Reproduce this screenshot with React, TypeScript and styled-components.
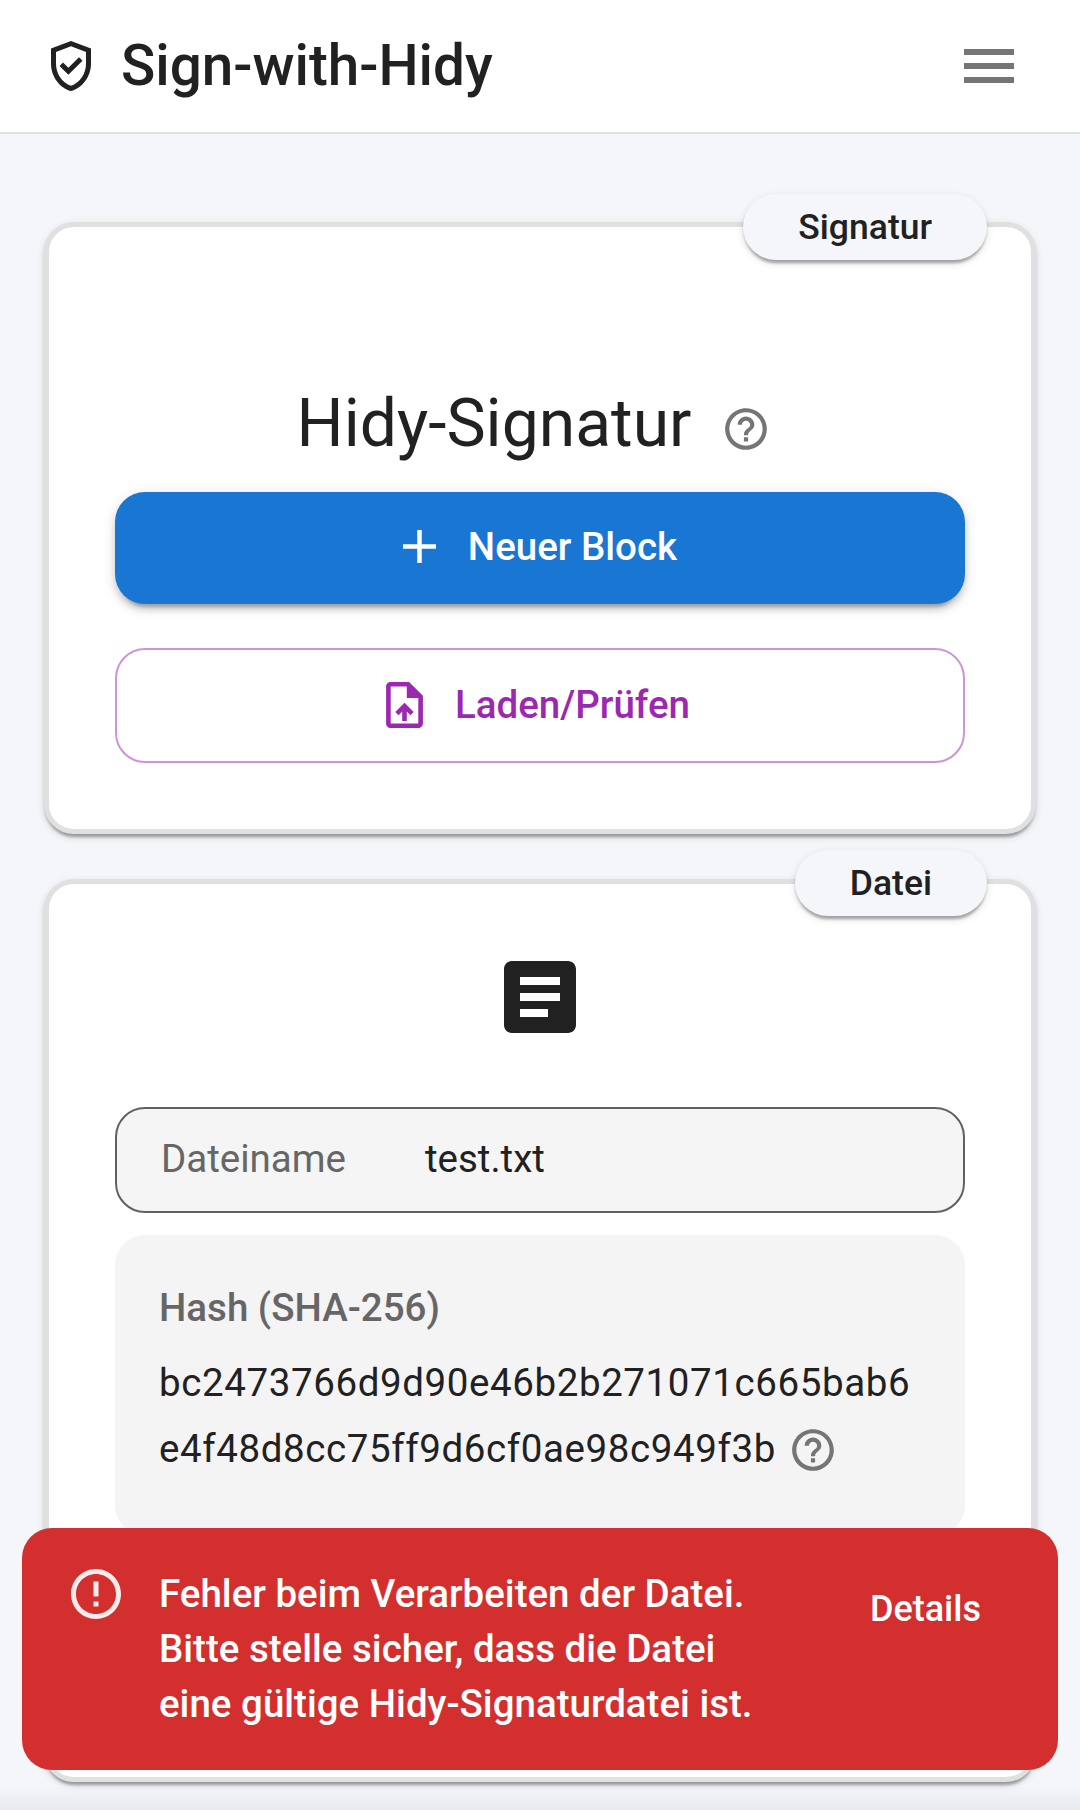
import React from 'react';
import styled, { createGlobalStyle } from 'styled-components';

const elevation1 = '0 6px 3px -3px rgba(0,0,0,.2), 0 3px 3px 0 rgba(0,0,0,.14), 0 3px 9px 0 rgba(0,0,0,.12)';
const elevation2 = '0 9px 3px -6px rgba(0,0,0,.2), 0 6px 6px 0 rgba(0,0,0,.14), 0 3px 15px 0 rgba(0,0,0,.12)';

const GlobalStyle = createGlobalStyle`
  html, body {
    margin: 0;
    padding: 0;
    background: #f5f6fa;
    font-family: Roboto, "Noto Sans", sans-serif;
    color: #212121;
  }
  * { box-sizing: border-box; }
`;

const Page = styled.div`
  position: relative;
  width: 1080px;
  height: 1810px;
  overflow: hidden;
  background: #f5f6fa;
`;

const Header = styled.header`
  display: flex;
  align-items: center;
  justify-content: space-between;
  height: 134px;
  padding: 0 66px 0 41px;
  background: #fff;
  border-bottom: 2px solid #e0e0e0;
`;

const Brand = styled.div`
  display: flex;
  align-items: center;
  gap: 20px;
`;

const BrandTitle = styled.h1`
  margin: 0;
  font-size: 56.6px;
  font-weight: 500;
  line-height: 64px;
`;

const Main = styled.main`
  display: flex;
  flex-direction: column;
  gap: 45px;
  padding: 88px 44px 0;
`;

const Card = styled.section`
  position: relative;
  display: flex;
  flex-direction: column;
  align-items: stretch;
  padding: 0 66px;
  background: #fff;
  border-radius: 30px;
  border: 5px solid #e0e0e0;
  box-shadow: ${elevation1};
`;

const TabLabel = styled.div<{ $raised?: boolean }>`
  position: absolute;
  top: ${p => (p.$raised ? '-34px' : '-33px')};
  right: 44px;
  display: flex;
  align-items: center;
  height: 66px;
  padding: 0 55px;
  border-radius: 33px;
  background: #f5f6fa;
  font-size: 35.5px;
  font-weight: 500;
  box-shadow: ${elevation1};
`;

const CardHeading = styled.div`
  display: flex;
  align-items: center;
  justify-content: center;
  gap: 30px;
  margin-top: 157px;
  height: 80px;
  padding-right: 12px;
`;

const HeadingText = styled.h2`
  margin: 0;
  font-size: 66px;
  font-weight: 400;
  line-height: 80px;
`;

const HeadingHelp = styled.span`
  display: flex;
  margin-top: 9px;
`;

const ActionButton = styled.button<{ $primary?: boolean }>`
  display: flex;
  align-items: center;
  justify-content: center;
  gap: 32px;
  width: 100%;
  font-family: inherit;
  font-size: 38.5px;
  font-weight: 500;
  border-radius: 30px;
  ${p => p.$primary
    ? `
    height: 112px;
    margin-top: 28px;
    padding-bottom: 4px;
    background: #1976d2;
    color: #fff;
    border: none;
    box-shadow: ${elevation2};
  `
    : `
    height: 115px;
    margin: 44px 0 66px;
    padding: 0 4px 2px 0;
    background: #fff;
    color: #9c27b0;
    border: 2px solid #ce93d8;
  `}
`;

const FileIconRow = styled.div`
  display: flex;
  justify-content: center;
  margin: 77px 0 74px;
`;

const NameField = styled.div`
  display: flex;
  align-items: center;
  gap: 79px;
  height: 106px;
  padding: 0 44px 3px;
  background: #f5f5f5;
  border: 2px solid #616161;
  border-radius: 30px;
  font-size: 38.5px;
`;

const FieldLabel = styled.span`
  color: #666;
`;

const HashBox = styled.div`
  margin: 22px 0 242px;
  height: 300px;
  padding: 51px 44px 0;
  background: #f4f4f5;
  border-radius: 30px;
`;

const HashLabel = styled.div`
  font-size: 38.5px;
  font-weight: 500;
  color: #666;
  line-height: 44px;
`;

const HashValue = styled.div`
  margin-top: 19px;
`;

const HashLine = styled.div`
  display: flex;
  align-items: center;
  gap: 12px;
  height: 66px;
  font-size: 38.5px;
  letter-spacing: 0.6px;
`;

const HashHelp = styled.span`
  display: flex;
  margin-top: 3px;
`;

const Toast = styled.div`
  position: absolute;
  left: 22px;
  right: 22px;
  top: 1528px;
  display: flex;
  align-items: flex-start;
  height: 242px;
  padding: 36px 77px 0 44px;
  background: #d32f2f;
  color: #fff;
  border-radius: 30px;
`;

const ToastIcon = styled.svg`
  flex: none;
  opacity: 0.9;
`;

const ToastText = styled.div`
  flex: 1;
  margin: 2px 0 0 33px;
  font-size: 38.5px;
  font-weight: 500;
  line-height: 55px;
`;

const ToastAction = styled.div`
  margin-top: 23px;
  font-size: 36px;
  font-weight: 500;
  line-height: 44px;
`;

const BottomShade = styled.div`
  position: absolute;
  left: 0;
  right: 0;
  bottom: 0;
  height: 24px;
  background: linear-gradient(to bottom, rgba(0, 0, 0, 0), rgba(0, 0, 0, 0.05));
`;

const HelpIcon = () => (
  <svg width="50" height="50" viewBox="0 0 24 24" fill="#757575">
    <path d="M11 18h2v-2h-2v2zm1-16C6.480 2 2 6.480 2 12s4.480 10 10 10 10-4.480 10-10S17.520 2 12 2zm0 18c-4.410 0-8-3.590-8-8s3.590-8 8-8 8 3.590 8 8-3.590 8-8 8zm0-14c-2.210 0-4 1.790-4 4h2c0-1.100.9-2 2-2s2 .9 2 2c0 2-3 1.750-3 5h2c0-2.250 3-2.500 3-5 0-2.210-1.790-4-4-4z" />
  </svg>
);

export default function App() {
  return (
    <Page>
      <GlobalStyle />
      <Header>
        <Brand>
          <svg width="60" height="60" viewBox="0 0 24 24" fill="#212121">
            <path d="M12 2 4 5v6.090c0 5.050 3.410 9.760 8 10.910 4.590-1.150 8-5.860 8-10.910V5l-8-3zm6 9.090c0 4-2.550 7.700-6 8.830-3.450-1.130-6-4.820-6-8.830v-4.700l6-2.250 6 2.250v4.700z" />
            <path d="M8.820 10.590 7.410 12l3.540 3.540 5.660-5.660-1.410-1.410-4.250 4.240z" />
          </svg>
          <BrandTitle>Sign-with-Hidy</BrandTitle>
        </Brand>
        <svg width="50" height="34" viewBox="0 0 50 34" fill="#757575">
          <rect x="0" y="0" width="50" height="6" />
          <rect x="0" y="14" width="50" height="6" />
          <rect x="0" y="28" width="50" height="6" />
        </svg>
      </Header>
      <Main>
        <Card>
          <TabLabel>Signatur</TabLabel>
          <CardHeading>
            <HeadingText>Hidy-Signatur</HeadingText>
            <HeadingHelp><HelpIcon /></HeadingHelp>
          </CardHeading>
          <ActionButton $primary>
            <svg width="33" height="33" viewBox="0 0 33 33" fill="#fff">
              <rect x="14.250" y="0" width="4.500" height="33" />
              <rect x="0" y="14.250" width="33" height="4.500" />
            </svg>
            Neuer Block
          </ActionButton>
          <ActionButton>
            <svg width="37" height="46" viewBox="4 2 16 20" fill="#9c27b0">
              <path d="M14 2H6c-1.100 0-2 .9-2 2v16c0 1.100.89 2 1.990 2H18c1.100 0 2-.9 2-2V8l-6-6zm4 18H6V4h7v5h5v11zM8 15.010l1.410 1.410L11 14.840V19h2v-4.160l1.590 1.590L16 15.010 12.010 11 8 15.010z" />
            </svg>
            Laden/Prüfen
          </ActionButton>
        </Card>
        <Card>
          <TabLabel $raised>Datei</TabLabel>
          <FileIconRow>
            <svg width="72" height="72" viewBox="3 3 18 18" fill="#212121">
              <path d="M19 3H5c-1.100 0-2 .9-2 2v14c0 1.100.9 2 2 2h14c1.100 0 2-.9 2-2V5c0-1.100-.9-2-2-2zm-5 14H7v-2h7v2zm3-4H7v-2h10v2zm0-4H7V7h10v2z" />
            </svg>
          </FileIconRow>
          <NameField>
            <FieldLabel>Dateiname</FieldLabel>
            <span>test.txt</span>
          </NameField>
          <HashBox>
            <HashLabel>Hash (SHA-256)</HashLabel>
            <HashValue>
              <HashLine>bc2473766d9d90e46b2b271071c665bab6</HashLine>
              <HashLine>e4f48d8cc75ff9d6cf0ae98c949f3b <HashHelp><HelpIcon /></HashHelp></HashLine>
            </HashValue>
          </HashBox>
        </Card>
      </Main>
      <BottomShade />
      <Toast>
        <ToastIcon width="60" height="60" viewBox="0 0 24 24" fill="#fff">
          <path d="M11 15h2v2h-2zm0-8h2v6h-2zm.99-5C6.470 2 2 6.480 2 12s4.470 10 9.990 10C17.520 22 22 17.520 22 12S17.520 2 11.990 2zM12 20c-4.420 0-8-3.580-8-8s3.580-8 8-8 8 3.580 8 8-3.580 8-8 8z" />
        </ToastIcon>
        <ToastText>
          Fehler beim Verarbeiten der Datei.<br />
          Bitte stelle sicher, dass die Datei<br />
          eine gültige Hidy-Signaturdatei ist.
        </ToastText>
        <ToastAction>Details</ToastAction>
      </Toast>
    </Page>
  );
}
